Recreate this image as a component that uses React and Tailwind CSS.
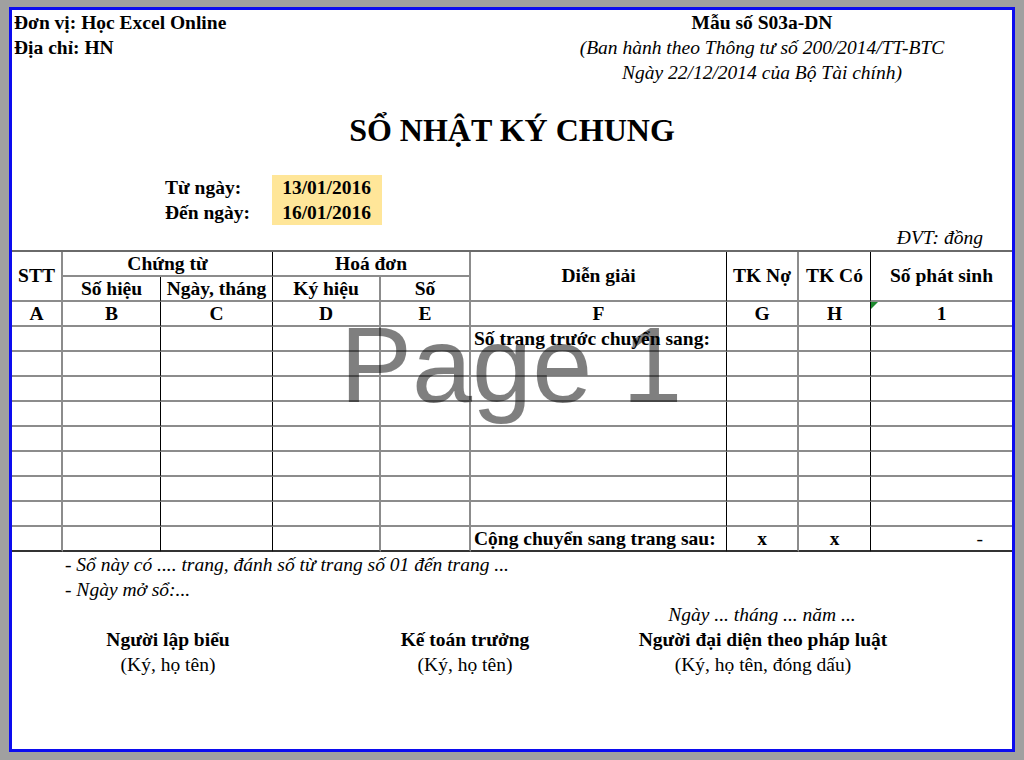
import React from "react";

const GR = "border-r-2 border-r-[#8c8c8c]";
const BR = "border-r border-r-black";
const HB = "border-b-2 border-b-[#8c8c8c]";

// right border of each column A..I
const colRight = [GR, BR, BR, GR, GR, BR, GR, BR, ""];

const Cell = ({ className = "", children }) => (
  <div className={`flex items-center justify-center ${className}`}>{children}</div>
);

const App = () => {
  const letters = ["A", "B", "C", "D", "E", "F", "G", "H", "1"];
  const rows = Array.from({ length: 9 }, (_, i) => i);

  return (
    <div className="w-[1024px] h-[760px] bg-[#a0a0a0] pt-[7px] pl-[9px] overflow-hidden">
      <div className="relative w-[1006px] h-[745px] bg-white border-[3px] border-[#0c0cef] text-black font-['Liberation_Serif','Times_New_Roman',serif] text-[19.5px] leading-none">
        {/* Top header */}
        <div className="flex justify-between">
          <div className="pl-[2px] font-bold">
            <div className="h-[25px] flex items-center">Đơn vị: Học Excel Online</div>
            <div className="h-[25px] flex items-center">Địa chỉ: HN</div>
          </div>
          <div className="w-[500px] text-center">
            <div className="h-[25px] flex items-center justify-center font-bold">Mẫu số S03a-DN</div>
            <div className="h-[25px] flex items-center justify-center italic">
              (Ban hành theo Thông tư số 200/2014/TT-BTC
            </div>
            <div className="h-[25px] flex items-center justify-center italic">
              Ngày 22/12/2014 của Bộ Tài chính)
            </div>
          </div>
        </div>
        <div className="h-[25px]" />
        <div className="h-[40px] flex items-center justify-center font-bold text-[32px]">
          SỔ NHẬT KÝ CHUNG
        </div>
        <div className="h-[25px]" />

        {/* Date range */}
        <div className="flex font-bold">
          <div className="w-[149px]" />
          <div className="w-[111px] pl-[4px]">
            <div className="h-[25px] flex items-center">Từ ngày:</div>
            <div className="h-[25px] flex items-center">Đến ngày:</div>
          </div>
          <div className="w-[110px] bg-[#ffe699] pr-[11px]">
            <div className="h-[25px] flex items-center justify-end">13/01/2016</div>
            <div className="h-[25px] flex items-center justify-end">16/01/2016</div>
          </div>
        </div>
        <div className="h-[25px] flex items-center justify-end pr-[29px] italic">ĐVT: đồng</div>

        {/* Table */}
        <div className="grid grid-cols-[51px_98px_112px_108px_90px_256px_72px_72px_141px] auto-rows-[25px] border-t-2 border-t-[#6a6a6a] font-bold">
          <Cell className={`row-span-2 ${GR} ${HB}`}>STT</Cell>
          <Cell className={`col-span-2 ${BR} ${HB}`}>Chứng từ</Cell>
          <Cell className={`col-span-2 ${GR} ${HB}`}>Hoá đơn</Cell>
          <Cell className={`row-span-2 ${BR} ${HB}`}>Diễn giải</Cell>
          <Cell className={`row-span-2 ${GR} ${HB}`}>TK Nợ</Cell>
          <Cell className={`row-span-2 ${BR} ${HB}`}>TK Có</Cell>
          <Cell className={`row-span-2 ${HB}`}>Số phát sinh</Cell>
          <Cell className={`${BR} ${HB}`}>Số hiệu</Cell>
          <Cell className={`${BR} ${HB}`}>Ngày, tháng</Cell>
          <Cell className={`${GR} ${HB}`}>Ký hiệu</Cell>
          <Cell className={`${GR} ${HB}`}>Số</Cell>

          {letters.map((l, i) => (
            <Cell key={l} className={`relative ${colRight[i]} ${HB}`}>
              {i === 8 && (
                <span className="absolute left-0 top-0 w-0 h-0 border-t-[7px] border-t-[#1d8a2e] border-r-[7px] border-r-transparent" />
              )}
              {l}
            </Cell>
          ))}

          {rows.map((r) =>
            letters.map((l, i) => {
              const bottom = r === 8 ? "border-b-2 border-b-[#333333]" : HB;
              let content = null;
              let align = "justify-center";
              if (i === 5 && r === 0) {
                content = "Số trang trước chuyển sang:";
                align = "justify-start pl-[3px]";
              }
              if (r === 8) {
                if (i === 5) {
                  content = "Cộng chuyển sang trang sau:";
                  align = "justify-start pl-[3px]";
                }
                if (i === 6 || i === 7) content = "x";
                if (i === 8) {
                  content = <span className="font-normal">-</span>;
                  align = "justify-end pr-[29px]";
                }
              }
              return (
                <div key={`${r}-${l}`} className={`flex items-center ${align} ${colRight[i]} ${bottom}`}>
                  {content}
                </div>
              );
            })
          )}
        </div>

        {/* Notes */}
        <div className="pl-[53px] italic">
          <div className="h-[25px] flex items-center">
            - Sổ này có .... trang, đánh số từ trang số 01 đến trang ...
          </div>
          <div className="h-[25px] flex items-center">- Ngày mở sổ:...</div>
        </div>
        <div className="flex justify-end">
          <div className="w-[500px] h-[25px] flex items-center justify-center italic">
            Ngày ... tháng ... năm ...
          </div>
        </div>

        {/* Signatures */}
        <div className="flex">
          <div className="ml-[51px] w-[210px] text-center">
            <div className="h-[25px] flex items-center justify-center font-bold">Người lập biểu</div>
            <div className="h-[25px] flex items-center justify-center">(Ký, họ tên)</div>
          </div>
          <div className="ml-[108px] w-[168px] text-center">
            <div className="h-[25px] flex items-center justify-center font-bold">Kế toán trưởng</div>
            <div className="h-[25px] flex items-center justify-center">(Ký, họ tên)</div>
          </div>
          <div className="w-[428px] text-center">
            <div className="h-[25px] flex items-center justify-center font-bold">
              Người đại diện theo pháp luật
            </div>
            <div className="h-[25px] flex items-center justify-center">(Ký, họ tên, đóng dấu)</div>
          </div>
        </div>

        {/* Page watermark */}
        <div className="absolute left-[328px] top-[301px] font-['Liberation_Sans',Arial,sans-serif] text-[108px] leading-none text-black/50 pointer-events-none whitespace-nowrap">
          Page 1
        </div>
      </div>
    </div>
  );
};

export default App;
